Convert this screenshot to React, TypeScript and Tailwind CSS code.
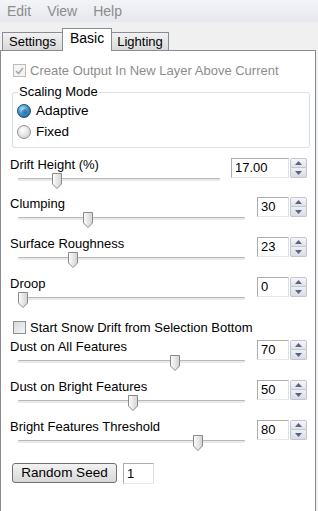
import React from "react";

type SliderRow = {
  label: string;
  value: string;
  track: number;
  thumb: number;
  inputW: number;
  rowH: number;
};

const topRows: SliderRow[] = [
  { label: "Drift Height (%)", value: "17.00", track: 202, thumb: 34, inputW: 58, rowH: 39 },
  { label: "Clumping", value: "30", track: 227, thumb: 65, inputW: 32, rowH: 40 },
  { label: "Surface Roughness", value: "23", track: 227, thumb: 50, inputW: 32, rowH: 40 },
  { label: "Droop", value: "0", track: 227, thumb: 0, inputW: 32, rowH: 40 },
];

const bottomRows: SliderRow[] = [
  { label: "Dust on All Features", value: "70", track: 227, thumb: 152, inputW: 32, rowH: 40 },
  { label: "Dust on Bright Features", value: "50", track: 227, thumb: 110, inputW: 32, rowH: 40 },
  { label: "Bright Features Threshold", value: "80", track: 227, thumb: 175, inputW: 32, rowH: 40 },
];

const Thumb = () => (
  <svg width="10" height="16" viewBox="0 0 10 16">
    <defs>
      <linearGradient id="thumbGrad" x1="0" x2="1" y1="0" y2="0">
        <stop offset="0" stopColor="#fdfdfd" />
        <stop offset="1" stopColor="#d2d2d2" />
      </linearGradient>
    </defs>
    <path d="M0.5 0.5H9.5V11L5 15.5L0.5 11Z" fill="url(#thumbGrad)" stroke="#8a8a8a" />
  </svg>
);

const Arrow = ({ up }: { up?: boolean }) => (
  <svg width="7" height="4" viewBox="0 0 7 4">
    <path d={up ? "M0 4L3.5 0L7 4Z" : "M0 0L3.5 4L7 0Z"} fill="#5a6488" />
  </svg>
);

const Spin = () => (
  <div className="flex flex-col w-[17px] h-[20px]">
    <div className="h-[10px] flex items-center justify-center border border-[#c3c6cf] rounded-t-[2px] bg-gradient-to-b from-[#f6f7f9] to-[#dfe2e9]">
      <Arrow up />
    </div>
    <div className="h-[10px] flex items-center justify-center border border-t-0 border-[#c3c6cf] rounded-b-[2px] bg-gradient-to-b from-[#eef0f4] to-[#d9dce4]">
      <Arrow />
    </div>
  </div>
);

const ValueBox = ({ value, w }: { value: string; w: number }) => (
  <div
    className="h-[20px] bg-white border border-[#abadb3] border-r-[#dbdfe6] border-b-[#e3e9ef] pl-[3px] text-[13px] leading-[18px] text-black"
    style={{ width: w }}
  >
    {value}
  </div>
);

const Row = ({ row }: { row: SliderRow }) => (
  <div className="flex justify-between" style={{ height: row.rowH }}>
    <div className="flex flex-col">
      <div className="text-[13px] leading-4 text-black">{row.label}</div>
      <div className="relative ml-[8px] h-[18px]" style={{ width: row.track }}>
        <div className="absolute left-0 right-0 top-[5px] h-[3px] rounded-[1px] border-t border-[#b8b8b8] bg-[#e9e9e9]" />
        <div className="absolute top-0" style={{ left: row.thumb }}>
          <Thumb />
        </div>
      </div>
    </div>
    <div className="flex gap-[1px] mt-[1px]">
      <ValueBox value={row.value} w={row.inputW} />
      <Spin />
    </div>
  </div>
);

export default function App() {
  return (
    <div
      className="w-[318px] h-[511px] overflow-hidden bg-[#f0f0f0] text-black"
      style={{ fontFamily: '"Liberation Sans", Arial, sans-serif' }}
    >
      {/* Menu */}
      <div className="h-[22px] flex items-center gap-4 pl-[7px] text-[14px] text-[#8c8c8c] bg-gradient-to-b from-[#f3f4f8] to-[#e6e8ee]">
        <span>Edit</span>
        <span>View</span>
        <span>Help</span>
      </div>

      {/* Tabs */}
      <div className="flex items-end h-[28px] pt-[6px] pl-[2px]">
        <div className="h-[18px] px-[6px] border border-b-0 border-[#898c95] bg-gradient-to-b from-[#f2f2f2] to-[#d9d9d9] text-[13px] leading-[17px]">
          Settings
        </div>
        <div className="relative z-10 -mb-[1px] -ml-[1px] h-[23px] px-[7px] border border-b-0 border-[#898c95] bg-white text-[14px] leading-[19px]">
          Basic
        </div>
        <div className="h-[18px] -ml-[1px] px-[5px] border border-b-0 border-[#898c95] bg-gradient-to-b from-[#f2f2f2] to-[#d9d9d9] text-[13px] leading-[17px]">
          Lighting
        </div>
      </div>

      {/* Panel */}
      <div className="w-[316px] h-[480px] border border-[#898c95] bg-white pl-[9px] pr-[8px]">
        <div className="mt-[12px] h-[15px] flex items-center gap-[4px] pl-[3px] text-[13px] text-[#8d8d8d]">
          <div className="w-[13px] h-[13px] border border-[#bcbcbc] bg-[#f4f4f4] flex items-center justify-center">
            <svg width="9" height="8" viewBox="0 0 9 8">
              <path d="M1 4L3.5 6.5L8 1" fill="none" stroke="#a8a8a8" strokeWidth="1.6" />
            </svg>
          </div>
          <span>Create Output In New Layer Above Current</span>
        </div>

        <div className="relative mt-[14px] ml-[2px] w-[298px] h-[56px] border border-[#d5dfe5] rounded-[3px] pt-[11px] pl-[4px] flex flex-col gap-[7px]">
          <div className="absolute -top-[9px] left-[5px] px-[1px] bg-white text-[13px] leading-4">Scaling Mode</div>
          <div className="h-[14px] flex items-center gap-[5px] text-[13.5px]">
            <div className="w-[14px] h-[14px] rounded-full border border-[#2c4e6e] bg-[radial-gradient(circle_at_40%_35%,#bfe6fb_0%,#3b97d3_45%,#124a7a_100%)] flex items-center justify-center">
              <div className="w-[5px] h-[5px] rounded-full bg-[#0e2f52] opacity-40" />
            </div>
            <span>Adaptive</span>
          </div>
          <div className="h-[14px] flex items-center gap-[5px] text-[13.5px]">
            <div className="w-[14px] h-[14px] rounded-full border border-[#8e8f8f] bg-[radial-gradient(circle_at_40%_35%,#ffffff_0%,#e4e4e4_50%,#c5c5c5_100%)]" />
            <span>Fixed</span>
          </div>
        </div>

        <div className="mt-[9px]">
          {topRows.map((r) => (
            <Row key={r.label} row={r} />
          ))}
        </div>

        <div className="h-[23px] flex items-center gap-[4px] pl-[3px] text-[13px]">
          <div className="w-[13px] h-[13px] border border-[#8e8f8f] bg-gradient-to-br from-[#d8d8d8] to-[#f7f7f7]" />
          <span>Start Snow Drift from Selection Bottom</span>
        </div>

        {bottomRows.map((r) => (
          <Row key={r.label} row={r} />
        ))}

        <div className="mt-[4px] ml-[2px] flex items-start gap-[6px]">
          <div className="w-[105px] h-[20px] rounded-[3px] border border-[#707070] bg-gradient-to-b from-[#f2f2f2] to-[#d8d8d8] text-[13.5px] leading-[18px] text-center">
            Random Seed
          </div>
          <div className="w-[31px] h-[21px] bg-white border border-[#abadb3] border-r-[#dbdfe6] border-b-[#e3e9ef] pl-[3px] text-[13px] leading-[19px]">
            1
          </div>
        </div>
      </div>
    </div>
  );
}
